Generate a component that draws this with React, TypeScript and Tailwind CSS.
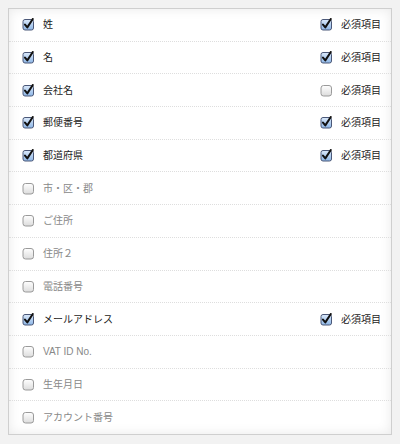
import React from 'react'

type Field = { label: string; on: boolean; req?: boolean }

const fields: Field[] = [
  { label: '姓', on: true, req: true },
  { label: '名', on: true, req: true },
  { label: '会社名', on: true, req: false },
  { label: '郵便番号', on: true, req: true },
  { label: '都道府県', on: true, req: true },
  { label: '市・区・郡', on: false },
  { label: 'ご住所', on: false },
  { label: '住所２', on: false },
  { label: '電話番号', on: false },
  { label: 'メールアドレス', on: true, req: true },
  { label: 'VAT ID No.', on: false },
  { label: '生年月日', on: false },
  { label: 'アカウント番号', on: false },
]

function Box({ checked }: { checked: boolean }) {
  if (checked) {
    return (
      <svg width="13" height="13" viewBox="0 0 13 13" className="shrink-0">
        <defs>
          <linearGradient id="cb-on" x1="0" y1="0" x2="0" y2="1">
            <stop offset="0" stopColor="#dbe9fa" />
            <stop offset="1" stopColor="#8db6e6" />
          </linearGradient>
        </defs>
        <rect x="1" y="1.5" width="10.5" height="10.5" rx="2" fill="url(#cb-on)" stroke="#4b5878" />
        <path d="M3 6.6 L5.3 9.4 L10.8 1" fill="none" stroke="#111" strokeWidth="2" strokeLinecap="round" strokeLinejoin="round" />
      </svg>
    )
  }
  return (
    <svg width="13" height="13" viewBox="0 0 13 13" className="shrink-0">
      <defs>
        <linearGradient id="cb-off" x1="0" y1="0" x2="0" y2="1">
          <stop offset="0" stopColor="#ffffff" />
          <stop offset="1" stopColor="#dcdcdc" />
        </linearGradient>
      </defs>
      <rect x="1" y="1.5" width="10.5" height="10.5" rx="2.5" fill="url(#cb-off)" stroke="#9a9a9a" />
    </svg>
  )
}

export default function App() {
  return (
    <div
      className="w-[400px] h-[444px] bg-[#f2f2f2] pt-2 px-2"
      style={{ fontFamily: '"Liberation Sans", "Noto Sans CJK JP", sans-serif' }}
    >
      <div className="border border-[#cfcfcf] bg-white shadow-[inset_0_0_12px_rgba(0,0,0,0.09)]">
        {fields.map((f, i) => (
          <div
            key={f.label}
            className={`flex items-center h-[32.7px] pl-[13px] pr-[10px] ${
              i < fields.length - 1 ? 'border-b border-dotted border-[#dedede]' : ''
            }`}
          >
            <Box checked={f.on} />
            <span className={`ml-[8px] text-[10px] ${f.on ? 'text-[#222]' : 'text-[#888]'}`}>{f.label}</span>
            {f.on && (
              <div className="ml-auto flex items-center">
                <Box checked={!!f.req} />
                <span className="ml-[8px] text-[10px] text-[#222]">必須項目</span>
              </div>
            )}
          </div>
        ))}
      </div>
    </div>
  )
}
